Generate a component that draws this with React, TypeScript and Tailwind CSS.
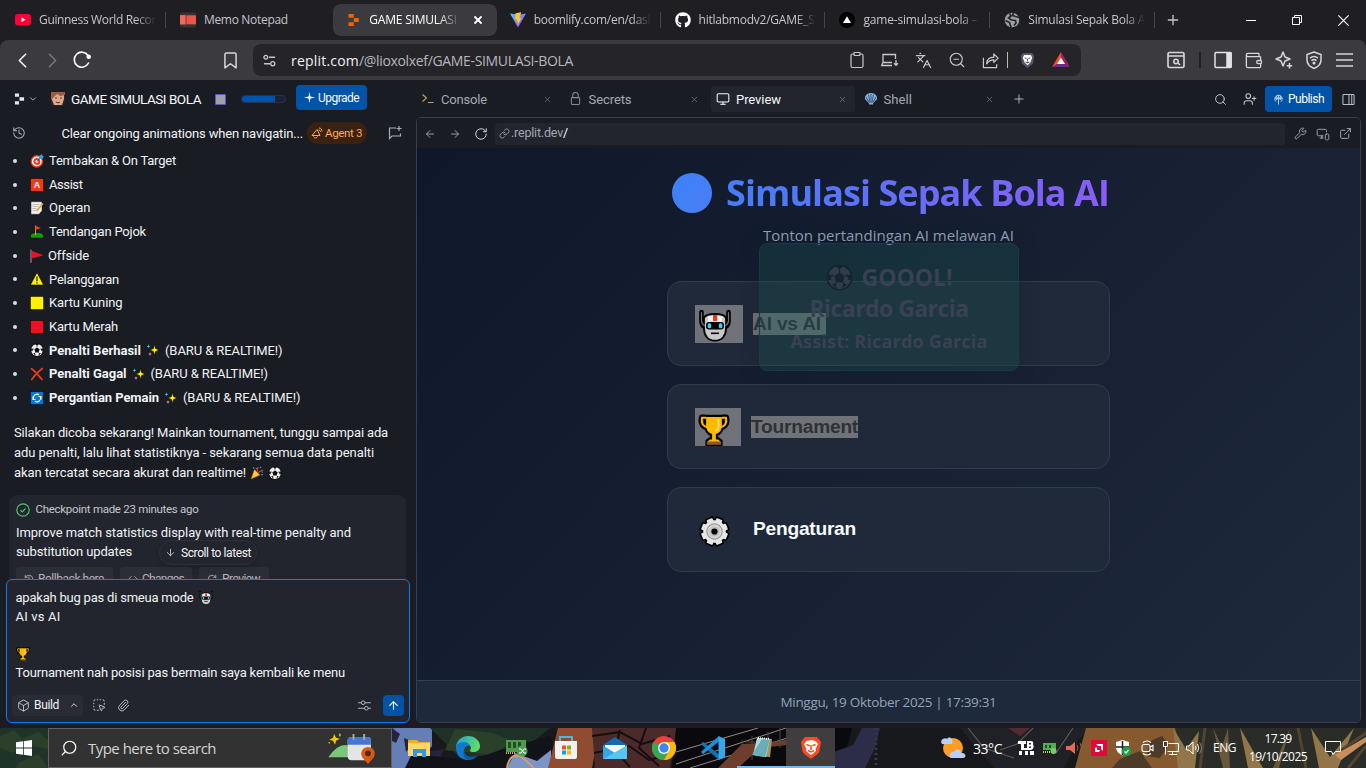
import React, { useLayoutEffect, useRef, useState } from "react";
import { FaGithub } from "react-icons/fa";
import {
  ArrowDown, ArrowLeft, ArrowRight, ArrowUp, Box, ChevronDown, ChevronLeft, ChevronRight, ChevronUp,
  Clipboard, Code, ExternalLink, History, Languages, Link, Monitor, MonitorSmartphone,
  Paperclip, Plus, RotateCw, Search, SquareDashedMousePointer, UserPlus, Wallet, Wrench, X, ZoomOut,
} from "lucide-react";

type FitProps = { w?: number; className?: string; children: string };

// Tracks text so that it fills the requested width.
function Fit({ w, className = "", children }: FitProps) {
  const ref = useRef<HTMLSpanElement>(null);
  const [spacing, setSpacing] = useState(0);
  useLayoutEffect(() => {
    if (ref.current && w) {
      setSpacing((w - ref.current.getBoundingClientRect().width) / children.length);
    }
  }, []);
  return (
    <span ref={ref} className={`inline-block shrink-0 whitespace-pre ${className}`} style={{ letterSpacing: spacing }}>
      {children}
    </span>
  );
}

function Cell({ className = "", children }: { className?: string; children?: React.ReactNode }) {
  return <div className={`flex shrink-0 items-center justify-center ${className}`}>{children}</div>;
}

/* ---------- Emoji drawings ---------- */

function Robot({ className = "" }) {
  return (
    <svg viewBox="0 0 32 32" className={`shrink-0 ${className}`}>
      <path d="M2.500 2.500v9c0 3 1 5 3 6M29.500 2.500v9c0 3-1 5-3 6" fill="none" stroke="#000" strokeWidth="4.600" strokeLinecap="round" />
      <path d="M5 8.500c1-3 4-4 11-4s10 1 11 4V19c0 7-4 12.200-11 12.200S5 26 5 19z" fill="#c9c9c9" stroke="#000" strokeWidth="1.800" />
      <path d="M2.500 3v8c0 3 1 4 3 5M29.500 3v8c0 3-1 4-3 5" fill="none" stroke="#777" strokeWidth="1.200" strokeLinecap="round" />
      <path d="M9 7c4-1.500 10-1.500 14 0v5H9z" fill="#f2f2f2" />
      <rect x="14" y="5.500" width="4.200" height="6" fill="#f03a17" />
      <rect x="7" y="12.500" width="18" height="7.500" rx="3" fill="#000" />
      <rect x="8.600" y="13.800" width="3.600" height="5" rx="1.500" fill="#3dcdf5" />
      <rect x="19.800" y="13.800" width="3.600" height="5" rx="1.500" fill="#3dcdf5" />
      <path d="M12 23.800h8" stroke="#000" strokeWidth="1.600" />
    </svg>
  );
}

function Trophy({ className = "" }) {
  return (
    <svg viewBox="0 0 32 32" className={`shrink-0 ${className}`}>
      <path d="M7 3H3.500c-2 7 2 10.500 7 11.500M25 3h3.500c2 7-2 10.500-7 11.500" fill="none" stroke="#000" strokeWidth="5" strokeLinejoin="round" />
      <path d="M7 1.800h18v9.500c0 5-3 8.500-6 9.500v3.500h1.500l3 2.500v4.500h-15v-4.500l3-2.500H13v-3.500c-3-1-6-4.500-6-9.500z" fill="#ffb900" stroke="#000" strokeWidth="2.200" />
      <path d="M8 3.800H4C3 9 5 12.500 10 13.500M24 3.800h4C29 9 27 12.500 22 13.500" fill="none" stroke="#ffb900" strokeWidth="2" />
      <path d="M20.500 5v8c0 2.500-1.500 3.500-3.500 4" fill="none" stroke="#ffdc80" strokeWidth="1.600" />
      <path d="M8.800 27.500h14.400v3.200H8.800z" fill="#8e562e" />
    </svg>
  );
}

const gearTeeth = [0, 45, 90, 135, 180, 225, 270, 315];

function Gear({ className = "" }) {
  return (
    <svg viewBox="0 0 32 32" className={`shrink-0 ${className}`}>
      {gearTeeth.map((a) => <rect key={a} x="11.200" y="0.500" width="9.600" height="8" rx="2" fill="#000" transform={`rotate(${a + 22.5} 16 16)`} />)}
      <circle cx="16" cy="16" r="13.200" fill="#000" />
      {gearTeeth.map((a) => <rect key={a} x="12.700" y="2.200" width="6.600" height="6" rx="1" fill="#e6e6e6" transform={`rotate(${a + 22.5} 16 16)`} />)}
      <circle cx="16" cy="16" r="11.600" fill="#e6e6e6" />
      <circle cx="16" cy="16" r="8" fill="#d2d2d2" stroke="#767676" strokeWidth="0.800" />
      <circle cx="16" cy="16" r="5" fill="#bcbcbc" />
      <circle cx="16" cy="16" r="3.200" fill="#000" />
    </svg>
  );
}

function Ball({ className = "", light = "#f2f2f2", dark = "#101014" }) {
  return (
    <svg viewBox="0 0 32 32" className={`shrink-0 ${className}`}>
      <circle cx="16" cy="16" r="15.500" fill={dark} />
      <circle cx="16" cy="16" r="13.500" fill={light} />
      <path d="M16 10l6 4.500-2.300 7h-7.400L10 14.500z" fill={dark} />
      <path d="M11.500 2.500h9L16 6.500zM2.500 12L7 13.500 5.500 19 2.500 19zM29.500 12L25 13.500l1.500 5.500 3 0zM7 24l4-1 2 6zM25 24l-4-1-2 6z" fill={dark} />
      <path d="M16 10V5M10 14.500L6 13M22 14.500l4-1.500M12.300 21.500L10 25M19.700 21.500L22 25" stroke={dark} strokeWidth="1.200" />
    </svg>
  );
}

function Sparkles() {
  return (
    <svg viewBox="0 0 14 14" className="size-3.5 shrink-0">
      <path d="M8.500 1.500l1 4 3.500 1.500-3.500 1.500-1 4-1-4L4 7l3.500-1.500z" fill="#fff100" stroke="#000" strokeWidth=".5" />
      <path d="M2.500 1.200l.5 1.600 1.500.6-1.500.6-.5 1.500L2 4 .6 3.400 2 2.800z" fill="#28c3ee" />
      <path d="M4 9l.5 1.400 1.300.6-1.300.6L4 13l-.5-1.400L2.200 11l1.300-.6z" fill="#f49ac8" />
    </svg>
  );
}

function Party() {
  return (
    <svg viewBox="0 0 14 14" className="size-3.5 shrink-0">
      <path d="M4.500 3.500L1 13l9-4z" fill="#ffc83d" stroke="#9b6a12" strokeWidth=".5" />
      <path d="M7 6c1-3 0-3.500 1-5M8 7c2-3 3-1 5-3" fill="none" stroke="#d83b2c" strokeWidth="1.200" />
      <path d="M3 1.500l1.300.8M10 1l1 1M11 8.500l2 .5" stroke="#28a8ee" strokeWidth="1.200" />
      <path d="M6 2l.5 1M12 6l1 .3" stroke="#4bbf4b" strokeWidth="1.100" />
    </svg>
  );
}

function ListEmoji({ kind }: { kind: string }) {
  if (kind === "ball") return <Ball className="size-3.5" />;
  return (
    <svg viewBox="0 0 14 14" className="size-3.5 shrink-0">
      {kind === "target" && <>
        <circle cx="6.800" cy="7.400" r="6.300" fill="#f03a17" /><circle cx="6.800" cy="7.400" r="4.200" fill="none" stroke="#fff" strokeWidth="1.400" />
        <circle cx="6.800" cy="7.400" r="1.300" fill="#fff" /><path d="M7 7.500L10 4" stroke="#444" /><path d="M8.500 5L8.800 2.200 12 0l.3 1.700 1.700.3-2 3z" fill="#28a8e0" />
      </>}
      {kind === "assist" && <><rect width="14" height="14" fill="#000" /><rect x=".7" y=".7" width="12.600" height="12.600" fill="#f03a17" /><text x="7" y="10.300" textAnchor="middle" className="fill-white font-['Liberation_Sans'] text-[9px] font-bold">A</text></>}
      {kind === "memo" && <><path d="M1 .7h11v9l-3 3.600H1z" fill="#f2f2f2" stroke="#222" strokeWidth=".5" /><path d="M2.500 3.500h7M2.500 5.500h6M2.500 7.500h4M2.500 9.500h3" stroke="#aaa" strokeWidth=".8" /><path d="M6.500 10l6.500-7.500" stroke="#e6a32e" strokeWidth="1.700" /></>}
      {kind === "golf" && <><path d="M.5 10.500C1 6.500 13 6.500 13.500 10.500V13H.5z" fill="#139a10" stroke="#000" strokeWidth=".5" /><path d="M5.500 10V.5" stroke="#dd9b28" /><path d="M5.500.8L11 3 5.500 5z" fill="#f03a17" /></>}
      {kind === "flag" && <><path d="M1 .7v13" stroke="#999" strokeWidth="1.100" /><path d="M1.700 1.800L13.500 6.200 1.700 9.500z" fill="#e81224" /></>}
      {kind === "warn" && <><path d="M7 .5L13.600 13H.4z" fill="#fff100" stroke="#000" strokeWidth=".6" /><path d="M7 4.500v4.700M7 10.300v1.300" stroke="#111" strokeWidth="1.200" /></>}
      {kind === "yellow" && <><rect width="14" height="14" fill="#000" /><rect x=".7" y=".7" width="12.600" height="12.600" fill="#fff100" /></>}
      {kind === "red" && <><rect width="14" height="14" fill="#000" /><rect x=".7" y=".7" width="12.600" height="12.600" fill="#e81224" /></>}
      {kind === "cross" && <path d="M1.500 1.800C5 4 9 9 12 12.500M12.300 1.500C8 5 4 9 1.800 12.500" fill="none" stroke="#f03a17" strokeWidth="1.700" strokeLinecap="round" />}
      {kind === "sync" && <><rect width="14" height="14" fill="#000" /><rect x=".7" y=".7" width="12.600" height="12.600" fill="#0078d7" /><path d="M3.500 8a3.700 3.700 0 0 1 5.500-4.200M10.500 6A3.700 3.700 0 0 1 5 10.200M3 5.500v3h2.500M11 8.500v-3H8.500" fill="none" stroke="#fff" strokeWidth="1.100" /></>}
    </svg>
  );
}

/* ---------- Browser chrome ---------- */

function TabIcon({ kind }: { kind: string }) {
  if (kind === "github") return <FaGithub className="size-4 shrink-0 text-white" />;
  return (
    <svg viewBox="0 0 16 16" className="size-4 shrink-0">
      {kind === "youtube" && <><rect y="2" width="16" height="11.500" rx="3" fill="#ff0033" /><path d="M6.500 5.300v5l4-2.500z" fill="#fff" /></>}
      {kind === "memo" && <><rect y=".5" width="16" height="15" rx="2" fill="#353535" /><rect y="3.300" width="16" height="9" fill="#e9564b" /><path d="M0 3.300h6v9H0z" fill="#f26a5e" /><path d="M6 1v14" stroke="#6d2723" strokeWidth=".8" /></>}
      {kind === "replit" && <path d="M3.500 2h5.300v3.800H3.500zM8.800 6h5v4h-5zM3.500 10.200h5.300V14H3.500z" fill="#f26207" />}
      {kind === "vite" && <><defs><linearGradient id="vg" x2="1" y2="1"><stop stopColor="#41d1ff" /><stop offset="1" stopColor="#bd34fe" /></linearGradient></defs><path d="M0 1.500L8 15.500 16 1.500l-7 1.200z" fill="url(#vg)" /><path d="M11.300.2L5.500 1.300l-.4 6.400 1.900-.4-.5 2.600 1.500-.4-.7 4 4.200-7.700-2 .4z" fill="#ffc928" /></>}
      {kind === "vercel" && <><circle cx="8" cy="8" r="8" fill="#000" /><path d="M8 4.200l4 6.800H4z" fill="#fff" /></>}
      {kind === "globe" && <><circle cx="8" cy="8" r="7.300" fill="#9aa0a8" /><path d="M1.500 8.500l4 2 1.500 4.500M5.500 1.500L7 4 4.500 6l3 2 4 .5L12 11l-2 2.500M9.500 1l-1 2.500 3 1 3.500 1" fill="none" stroke="#26272c" strokeWidth="1.700" /></>}
    </svg>
  );
}

const tabs = [
  { kind: "youtube", label: "Guinness World Recor", w: 117, sep: true },
  { kind: "memo", label: "Memo Notepad", w: 84, sep: false },
  { kind: "replit", label: "GAME SIMULASI B", w: 98, sep: false },
  { kind: "vite", label: "boomlify.com/en/dash", w: 121, sep: true },
  { kind: "github", label: "hitlabmodv2/GAME_S", w: 116, sep: true },
  { kind: "vercel", label: "game-simulasi-bola –", w: 114, sep: true },
  { kind: "globe", label: "Simulasi Sepak Bola AI", w: 120, sep: true },
];

function TabStrip() {
  return (
    <div className="flex h-10 bg-[#1f1e23] pl-px text-[12px] text-[#c6c5ca]">
      {tabs.map((t, i) => (
        <div key={t.label} className="flex h-10 w-[164.900px] shrink-0 items-center">
          <div className={`flex h-8 min-w-0 flex-1 items-center ${i === 2 ? "-mr-px ml-[2px] rounded-lg bg-[#3b3a3f] pl-[12.500px] text-white" : "pl-3.5"}`}>
            <TabIcon kind={t.kind} />
            <div className={`ml-2 overflow-hidden ${i === 2 ? "w-[92px] [mask-image:linear-gradient(to_right,black_75%,transparent)]" : t.kind === "memo" ? "w-[117px]" : "w-[117px] [mask-image:linear-gradient(to_right,black_83%,transparent)]"}`}>
              <Fit w={t.w}>{t.label}</Fit>
            </div>
            {i === 2 && <X className="ml-[11px] size-3 shrink-0" strokeWidth={3.6} />}
          </div>
          {t.sep && <div className="h-4 w-px bg-[#45444a]" />}
        </div>
      ))}
      <Cell className="w-9"><Plus className="size-4" strokeWidth={2} /></Cell>
      <div className="ml-auto flex text-white">
        <Cell className="w-[46px]"><div className="h-px w-[10px] bg-white" /></Cell>
        <Cell className="w-[46px]"><svg viewBox="0 0 10 10" className="size-[10px]" fill="none" stroke="currentColor"><path d="M.5 2.500h7v7h-7zM2.500 2.500v-2h7v7h-2" /></svg></Cell>
        <Cell className="w-[46px]"><svg viewBox="0 0 10 10" className="size-[11px]" stroke="currentColor"><path d="M.3.3l9.400 9.400M9.700.3L.3 9.700" /></svg></Cell>
      </div>
    </div>
  );
}

function Toolbar() {
  return (
    <div className="h-10 bg-[#1f1e23]">
      <div className="flex h-10 items-center rounded-t-lg bg-[#3b3a3f] pl-[7px] text-[#d8d7dc]">
        <Cell className="w-[30px]"><ChevronLeft className="size-[25px] text-white" strokeWidth={1.5} /></Cell>
        <Cell className="w-[30px]"><ChevronRight className="size-[25px] text-[#77767c]" strokeWidth={1.5} /></Cell>
        <Cell className="w-[30px]">
          <svg viewBox="0 0 18 18" className="size-[18px]" fill="none" stroke="#fff" strokeWidth="1.600" strokeLinecap="round"><path d="M15.500 12A7.500 7.500 0 1 1 15 4.500" /><circle cx="15.700" cy="5.800" r="1.500" fill="#fff" /></svg>
        </Cell>
        <Cell className="ml-[118px] w-[30px]"><svg viewBox="0 0 14 18" className="h-[17px] w-[13px]" fill="none" stroke="currentColor" strokeWidth="1.600" strokeLinejoin="round"><path d="M2.500 1h9Q13 1 13 2.500V17l-6-4.500L1 17V2.500Q1 1 2.500 1z" /></svg></Cell>
        <div className="ml-2 flex h-8 w-[828px] shrink-0 items-center rounded-lg bg-[#252429] text-[#c9c8cd]">
          <Cell className="w-8"><svg viewBox="0 0 14 14" className="size-[13px]" fill="none" stroke="currentColor" strokeWidth="1.400"><circle cx="3" cy="3.500" r="2" /><path d="M6.500 3.500H13M1 10.500h6.500" /><circle cx="10.500" cy="10.500" r="2.200" /></svg></Cell>
          <div className="ml-1.5 flex text-[14px]">
            <Fit w={68} className="text-[#f0f0f2]">replit.com</Fit><Fit w={214} className="text-[#b7b6bc]">/@lioxolxef/GAME-SIMULASI-BOLA</Fit>
          </div>
          <div className="ml-auto flex pr-[3px]">
            <Cell className="w-8"><Clipboard className="size-[18px]" strokeWidth={1.6} /></Cell>
            <Cell className="w-[33px]"><svg viewBox="0 0 18 14" className="h-[14px] w-[18px]" fill="none" stroke="currentColor" strokeWidth="1.300"><path d="M14.500 6V1.500H2v8M11 9.500H2L.7 12.500H11M15 7v5M13 10.300L15 12.300l2-2" /></svg></Cell>
            <Cell className="w-[34px]"><Languages className="size-[17px]" strokeWidth={1.7} /></Cell>
            <Cell className="w-[34px]"><ZoomOut className="size-[18px]" strokeWidth={1.5} /></Cell>
            <Cell className="w-[33px]"><svg viewBox="0 0 18 18" className="size-[17px]" fill="none" stroke="currentColor" strokeWidth="1.300" strokeLinejoin="round"><path d="M1.500 6v10.500h14V13M5 12.500c0-5 3-7 7.500-7V2L17 6.500 12.500 11V8.300c-3.500 0-5.500 1-7.500 4.200z" /></svg></Cell>
            <Cell className="w-px"><div className="h-4 w-px bg-[#b9b8bd]" /></Cell>
            <Cell className="ml-[2px] w-[34px]"><svg viewBox="0 0 16 18" className="h-[17px] w-[15px]"><path d="M3 1h10l2 3-1 8-6 5-6-5L1 4z" fill="#55586b" /><path d="M4.500 3h7L13 6l-2 5-3 3-3-3-2-5z" fill="#fff" /><path d="M5 6l2 1M11 6L9 7M8 7v3M6 10.500l2 1 2-1" stroke="#55586b" strokeWidth="1.100" /></svg></Cell>
            <Cell className="w-[34px]"><svg viewBox="0 0 18 16" className="h-[16px] w-[18px]"><path d="M9 0L0 15l9-4.500z" fill="#ff4724" /><path d="M9 0l9 15-9-4.500z" fill="#9e1f63" /><path d="M0 15h18l-9-5z" fill="#662d91" /><path d="M9 5.500L13 12H5z" fill="#fff" /></svg></Cell>
          </div>
        </div>
        <div className="ml-auto flex items-center pr-[7px]">
          <Cell className="w-8"><svg viewBox="0 0 18 18" className="size-[18px]" fill="none" stroke="currentColor" strokeWidth="1.600"><rect x="1" y="1.500" width="16" height="15" rx="1.500" /><path d="M1 5h16M11 12l2 2" /><circle cx="9" cy="10.500" r="2.200" /></svg></Cell>
          <Cell className="w-4"><div className="h-4 w-[2px] bg-[#222126]" /></Cell>
          <Cell className="w-[30px]"><svg viewBox="0 0 18 18" className="size-[18px]" fill="none" stroke="#e4e3e8" strokeWidth="1.500"><rect x="1" y="1.500" width="16" height="15" rx="1" /><path d="M13 2H17v14h-4z" fill="#e4e3e8" /></svg></Cell>
          <Cell className="w-[31px]"><Wallet className="size-[19px]" strokeWidth={1.6} /></Cell>
          <Cell className="w-[30px]"><svg viewBox="0 0 18 18" className="size-[18px]" fill="none" stroke="currentColor" strokeWidth="1.500" strokeLinejoin="round"><path d="M8 1l2 5 5 2-5 2-2 5-2-5-5-2 5-2zM14.500 12v5.500M11.700 14.700h5.500" /></svg></Cell>
          <Cell className="w-[30px]"><svg viewBox="0 0 18 18" className="size-[18px]" fill="none" stroke="currentColor" strokeWidth="1.500"><path d="M9 1l7 2.500v5C16 13 13 16 9 17.500 5 16 2 13 2 8.500v-5zM5 7.200c2.500-2 5.500-2 8 0M6.500 9.600c1.500-1.300 3.500-1.300 5 0" /><circle cx="9" cy="12" r=".8" fill="currentColor" /></svg></Cell>
          <Cell className="w-[30px]"><svg viewBox="0 0 17 14" className="h-[14px] w-[17px]" stroke="currentColor" strokeWidth="1.700"><path d="M0 1h17M0 7h17M0 13h17" /></svg></Cell>
        </div>
      </div>
    </div>
  );
}

/* ---------- Workspace: chat column ---------- */

const stats = [
  { kind: "target", label: "Tembakan & On Target", w: 127 },
  { kind: "assist", label: "Assist", w: 33.5 },
  { kind: "memo", label: "Operan", w: 41.5 },
  { kind: "golf", label: "Tendangan Pojok", w: 97 },
  { kind: "flag", label: "Offside", w: 41 },
  { kind: "warn", label: "Pelanggaran", w: 70 },
  { kind: "yellow", label: "Kartu Kuning", w: 73.5 },
  { kind: "red", label: "Kartu Merah", w: 69 },
  { kind: "ball", label: "Penalti Berhasil", w: 92, fresh: true },
  { kind: "cross", label: "Penalti Gagal", w: 77.5, fresh: true },
  { kind: "sync", label: "Pergantian Pemain", w: 110, fresh: true },
];

function ReplitLogo() {
  return <svg viewBox="0 0 12 12" className="h-[12px] w-[11px]"><path d="M1 0h4.500v3.500H1zM6 4h5v4H6zM1 8.500h4.500V12H1z" fill="#e4e6eb" /></svg>;
}

function ProjectBar() {
  return (
    <div className="flex h-[38px] items-center pl-3.5 text-[#f5f9fc]">
      <ReplitLogo />
      <ChevronDown className="ml-[3px] size-2.5 text-[#c2c8cc]" />
      <div className="ml-[13px] flex h-3.5 w-3.5 items-end justify-center rounded-sm bg-[#2b2320]">
        <svg viewBox="0 0 14 14" className="size-3.5"><path d="M1 1h12v6l-2 6H3L1 8z" fill="#d9a78c" /><path d="M0 0h14v3L9 4 6 2 2 6 0 8z" fill="#9b5b45" /><path d="M4 6h2M9 6h2M5 10c2 1 3 1 4 0" stroke="#7b2f29" /></svg>
      </div>
      <Fit w={130} className="ml-1.5 pt-px text-[13.500px]">GAME SIMULASI BOLA</Fit>
      <div className="ml-3.5 size-[11px] rounded-[1px] border-[1.500px] border-[#6155c4] bg-[#9da2a6]" />
      <div className="ml-[15px] flex h-2 w-[45px] rounded-full border border-[#2b3245] bg-[#1c2333]"><div className="w-[33px] rounded-l-full bg-[#0053a6]" /></div>
      <div className="mb-[3px] ml-2.5 flex h-[25px] w-[71px] items-center rounded bg-[#0053a6] pl-2">
        <svg viewBox="0 0 12 12" className="size-[11px]"><path d="M6 0l1 5 5 1-5 1-1 5-1-5-5-1 5-1z" fill="#fff" /></svg>
        <Fit w={41} className="ml-[3px] text-[12px]">Upgrade</Fit>
      </div>
    </div>
  );
}

function ChatPanel() {
  return (
    <div className="relative flex w-[416px] shrink-0 flex-col font-['Roboto',sans-serif] text-[13px] text-[#f0f3f6]">
      <ProjectBar />
      <div className="flex h-[30px] items-center pl-3">
        <History className="size-3.5 text-[#a9aeb6]" strokeWidth={1.8} />
        <Fit w={241.5} className="ml-[35.500px] pt-px">Clear ongoing animations when navigatin...</Fit>
        <div className="ml-[4px] flex h-[22px] w-[60px] items-center rounded-full bg-[#3a2213] pl-1 text-[#ffa657]">
          <svg viewBox="0 0 12 12" className="size-[12px]" fill="none" stroke="currentColor" strokeWidth="1"><path d="M1 8.500L6 2.500 9 8.500zM2.500 9.500c1 2 3 2 4 0M8 1c2 0 3 1.500 3 3.500M7.500 3c1.500 0 2 1 2 2" /></svg>
          <Fit w={37} className="ml-[2px] pt-px text-[11.500px]">Agent 3</Fit>
        </div>
        <svg viewBox="0 0 14 14" className="ml-[21px] size-3.5" fill="none" stroke="#a9aeb6" strokeWidth="1.200"><path d="M8 2H1.500v10.500L4 10h8.500V7.500M11 0v5M8.500 2.500h5" /></svg>
      </div>
      <div className="h-[431px] overflow-hidden">
        <ul className="pt-[1px]">
          {stats.map((s) => (
            <li key={s.kind} className="flex h-[23.700px] items-center pl-[13px]">
              <span className="size-1 rounded-full bg-[#d8dde2]" />
              <span className="ml-[13px] flex"><ListEmoji kind={s.kind} /></span>
              <Fit w={s.w} className={`${s.kind === "flag" ? "ml-1" : "ml-[5px]"} ${s.fresh ? "font-bold" : ""}`}>{s.label}</Fit>
              {s.fresh && <><span className="ml-[5px] mr-[5px]"><Sparkles /></span><Fit w={117.5}>(BARU & REALTIME!)</Fit></>}
            </li>
          ))}
        </ul>
        <div className="mt-[13px] flex flex-col pl-3.5 leading-5">
          <Fit w={374} className="self-start">Silakan dicoba sekarang! Mainkan tournament, tunggu sampai ada</Fit>
          <Fit w={360} className="self-start">adu penalti, lalu lihat statistiknya - sekarang semua data penalti</Fit>
          <div className="flex items-center gap-1"><Fit w={232}>akan tercatat secara akurat dan realtime!</Fit><Party /><Ball className="size-3.5" /></div>
        </div>
        <div className="ml-[9px] mt-[12px] h-28 w-[397px] rounded-lg bg-[#22252d] px-[7px] pt-1.5">
          <div className="flex h-[18px] items-center text-[12px] text-[#c2c8cc]">
            <svg viewBox="0 0 14 14" className="size-3.5" fill="none" stroke="#4fc26b" strokeWidth="1.200"><circle cx="7" cy="7" r="6.200" /><path d="M4.500 7.200l1.800 1.700 3.200-3.500" /></svg>
            <Fit w={163} className="ml-[5.500px] text-[11.500px]">Checkpoint made 23 minutes ago</Fit>
          </div>
          <div className="mt-[4px] flex flex-col leading-[19px]">
            <Fit w={335} className="self-start">Improve match statistics display with real-time penalty and</Fit>
            <Fit w={116} className="self-start">substitution updates</Fit>
          </div>
          <div className="mt-[6px] flex gap-[7px] text-[12px] text-[#aeb4bb]">
            <div className="flex h-[24px] w-[97px] items-center rounded bg-[#2b2e37] pl-2"><History className="size-[10px]" /><Fit w={66} className="ml-1">Rollback here</Fit></div>
            <div className="flex h-[24px] w-[72px] items-center rounded bg-[#2b2e37] pl-2"><Code className="size-[10px]" /><Fit w={42} className="ml-1">Changes</Fit></div>
            <div className="flex h-[24px] w-[70px] items-center rounded bg-[#2b2e37] pl-2"><RotateCw className="size-[10px]" /><Fit w={38} className="ml-[5px]">Preview</Fit></div>
          </div>
        </div>
      </div>
      <div className="absolute left-[159px] top-[460px] flex h-[25px] w-[98px] items-center rounded-full border border-[#2d3039] bg-[#22252d] pl-[5px] shadow-md">
        <ArrowDown className="size-[11px] text-[#c2c8cc]" strokeWidth={2} />
        <Fit w={70} className="ml-[5px] pt-px text-[12px]">Scroll to latest</Fit>
      </div>
      <div className="ml-[6px] h-36 w-[404px] rounded-md border border-[#0f7bf0] bg-[#22252d] px-[5px] pt-[8px]">
        <div className="flex h-[19px] items-center pl-[3.500px]"><Fit w={178}>apakah bug pas di smeua mode</Fit><Robot className="ml-[5px] size-3.5" /></div>
        <div className="h-[37px] pl-[3.500px] leading-[19px]"><Fit w={45}>AI vs AI</Fit></div>
        <div className="flex h-[19px] items-center pl-[4px]"><Trophy className="size-3.5" /></div>
        <div className="h-[19px] pl-[3.500px] leading-[19px]"><Fit w={329.5}>Tournament nah posisi pas bermain saya kembali ke menu</Fit></div>
        <div className="mt-[12px] flex h-[22px] items-center">
          <div className="flex h-[21px] w-[71px] items-center rounded bg-[#292c35] pl-[5px]"><Box className="size-[13px] text-[#c2c8cc]" strokeWidth={1.7} /><Fit w={25} className="ml-[4px] text-[12px]">Build</Fit><ChevronUp className="ml-[10px] size-2.5" /></div>
          <SquareDashedMousePointer className="ml-[9px] size-[14px] text-[#c2c8cc]" strokeWidth={1.6} />
          <Paperclip className="ml-[11px] size-[13px] text-[#c2c8cc]" strokeWidth={1.7} />
          <svg viewBox="0 0 14 12" className="ml-auto h-[11px] w-[13px]" fill="none" stroke="#b9bfc5"><path d="M0 3h3.500M7.500 3H14M0 9h7M11 9h3" /><circle cx="5.500" cy="3" r="2" /><circle cx="9" cy="9" r="2" /></svg>
          <Cell className="ml-3 h-[21px] w-[21px] rounded bg-[#0053a6]"><ArrowUp className="size-[13px]" strokeWidth={2} /></Cell>
        </div>
      </div>
    </div>
  );
}

/* ---------- Workspace: preview column ---------- */

function PaneTab({ icon, label, w, active }: { icon: React.ReactNode; label: string; w: number; active?: boolean }) {
  return (
    <div className={`mr-[4px] flex h-[26px] w-[143.500px] shrink-0 items-center rounded pl-[5px] ${active ? "bg-[#22252d] text-[#f5f9fc]" : "text-[#a4aab2]"}`}>
      <Cell className="w-[14px]">{icon}</Cell>
      <Fit w={w} className="ml-[6px] pt-px">{label}</Fit>
      <X className="ml-auto mr-[8px] size-[9px] text-[#6f7681]" strokeWidth={2} />
    </div>
  );
}

function PaneTabs() {
  return (
    <div className="flex h-[37px] items-center pt-px font-['Roboto',sans-serif] text-[13px] text-[#c2c8cc]">
      <PaneTab w={46} label="Console" icon={<svg viewBox="0 0 12 12" className="size-3" fill="none" stroke="#b9ab57" strokeWidth="1.100"><path d="M.5 1.500l4 3.500-4 3.500M6 9.500h5.500" /></svg>} />
      <PaneTab w={43} label="Secrets" icon={<svg viewBox="0 0 12 14" className="h-[14px] w-[11px]" fill="none" stroke="#858b95" strokeWidth="1.100"><rect x="1.500" y="5.500" width="9" height="7.500" rx="1" /><path d="M3 5.500V3a3 3 0 0 1 6 0v2.500" /></svg>} />
      <PaneTab w={45} label="Preview" active icon={<Monitor className="size-3.5" strokeWidth={1.8} />} />
      <PaneTab w={28.5} label="Shell" icon={<svg viewBox="0 0 14 14" className="size-3.5"><path d="M7 1c4 0 6.500 3 6 6l-4 4.500v1H5v-1L1 7c-.5-3 2-6 6-6z" fill="#85b2df" /><path d="M7 2v9M4.500 2.500l1.500 8M9.500 2.500L8 10.500M2 5l3 5.500M12 5l-3 5.500" stroke="#26415e" strokeWidth=".8" /></svg>} />
      <Plus className="ml-[6px] size-3.5" strokeWidth={1.5} />
      <div className="ml-auto flex items-center pr-[2px]">
        <Cell className="w-7"><Search className="size-[13px]" strokeWidth={1.8} /></Cell>
        <Cell className="w-[31px]"><UserPlus className="size-[14px]" strokeWidth={1.8} /></Cell>
        <div className="flex h-[26px] w-[67px] items-center rounded bg-[#0053a6] pl-[8px] text-white">
          <svg viewBox="0 0 12 12" className="size-[11px]" fill="none" stroke="#c7dcf5" strokeWidth="1"><path d="M3.500 8.500A4 4 0 1 1 8.500 8.500M6 1v10.500M2 4.500h8M3.500 6.500L6 4l2.500 2.500M4 2v4M8 2v4" /></svg>
          <Fit w={36} className="ml-[4px] text-[12px]">Publish</Fit>
        </div>
        <Cell className="w-[32px]"><svg viewBox="0 0 14 14" className="size-[13px]" fill="none" stroke="#b9bfc5" strokeWidth="1.100"><rect x="1" y="1.500" width="12" height="11" rx="1" /><path d="M7.500 1.500v11M10.500 2v10" /></svg></Cell>
      </div>
    </div>
  );
}

function PreviewNav() {
  return (
    <div className="flex h-[30px] shrink-0 items-center bg-[#1a1c23] pl-[3px] pt-px font-['Roboto',sans-serif] text-[#a1a7b0]">
      <Cell className="w-5"><ArrowLeft className="size-3" strokeWidth={1.8} /></Cell>
      <Cell className="ml-[5px] w-5"><ArrowRight className="size-3" strokeWidth={1.8} /></Cell>
      <Cell className="ml-[6px] w-5"><RotateCw className="size-3.5 text-[#cdd2d7]" strokeWidth={1.7} /></Cell>
      <div className="ml-[4px] flex h-[22px] w-[790px] items-center rounded bg-[#22252d] pl-[4px] text-[12.500px]">
        <Link className="size-[11px]" strokeWidth={1.8} />
        <Fit w={52} className="ml-[1px]">.replit.dev</Fit><span className="text-white">/</span>
      </div>
      <Wrench className="ml-[9px] size-[13px]" strokeWidth={1.7} />
      <MonitorSmartphone className="ml-[9px] size-[14px]" strokeWidth={1.6} />
      <ExternalLink className="ml-[9px] size-[13px]" strokeWidth={1.8} />
    </div>
  );
}

function MenuCard({ children }: { children: React.ReactNode }) {
  return <div className="flex h-[85px] w-[443px] items-center rounded-[14px] border border-[#2e3c4d] bg-[#1f2939] pl-[27px] font-['Liberation_Sans',Arial,sans-serif] text-[19.200px] font-bold">{children}</div>;
}

function GameScreen() {
  return (
    <div className="relative flex min-h-0 flex-1 flex-col items-center bg-[linear-gradient(135deg,#0f172a,#1e293b)]">
      <div className="flex h-[64px] w-[443px] items-end pl-[5px]">
        <div className="mb-[-1px] size-10 rounded-full bg-[linear-gradient(135deg,#3b82f6,#4a7df6)]" />
        <Fit w={383} className="ml-[14px] mb-[-2px] bg-[linear-gradient(100deg,#447ef6,#8b5cf6)] bg-clip-text text-[36px] font-bold leading-[42px] text-transparent">Simulasi Sepak Bola AI</Fit>
      </div>
      <Fit w={251} className="mt-[11px] text-[15px] leading-[24px] text-[#94a3b8]">Tonton pertandingan AI melawan AI</Fit>
      <div className="mt-[34px] flex flex-col gap-[18px]">
        <MenuCard>
          <div className="flex h-[38px] w-12 items-end bg-[#6f7379] pb-px pl-1"><Robot className="h-[33px] w-8" /></div>
          <div className="ml-2.5 h-[22px] w-[73px] bg-[#6f7379] leading-[21px] text-[#30343a]"><Fit w={68}>AI vs AI</Fit></div>
        </MenuCard>
        <MenuCard>
          <div className="flex h-[38px] w-[46px] items-end bg-[#6f7379] pl-[3px]"><Trophy className="size-[32px]" /></div>
          <div className="ml-2.5 h-[22px] w-[107px] bg-[#6f7379] leading-[21px] text-[#303135]"><Fit w={107}>Tournament</Fit></div>
        </MenuCard>
        <MenuCard>
          <Gear className="ml-1 mt-[3px] size-[31px]" />
          <Fit w={103} className="ml-[23px] text-[#f8fafc]">Pengaturan</Fit>
        </MenuCard>
      </div>
      <div className="absolute left-[342px] top-[95px] flex h-[128px] w-[260px] flex-col items-center rounded-lg border border-[#173b42] bg-[#16534e]/35 pt-[18px] font-bold text-[#3a4154] shadow-[0_0_20px_rgba(15,23,42,0.25)]">
        <div className="flex h-[31px] items-center gap-[9px] text-[23px]"><Ball className="size-[27px]" light="#2d3d4a" dark="#17232f" /><Fit w={91}>GOOOL!</Fit></div>
        <Fit w={159} className="h-[32px] text-[23px] leading-[31px]">Ricardo Garcia</Fit>
        <Fit w={197} className="mt-[1px] text-[18px] leading-[30px]">Assist: Ricardo Garcia</Fit>
      </div>
    </div>
  );
}

function PreviewPanel() {
  return (
    <div className="flex w-[950px] flex-col">
      <PaneTabs />
      <div className="flex h-[606px] w-[945px] flex-col overflow-hidden rounded-[5px] border border-[#3b3d47]">
        <PreviewNav />
        <GameScreen />
        <Cell className="h-[42px] border-t border-[#334155] bg-[#1e293b] pt-[2px] text-[13.500px] text-[#94a3b8]"><Fit w={216}>Minggu, 19 Oktober 2025 | 17:39:31</Fit></Cell>
      </div>
    </div>
  );
}

/* ---------- Windows taskbar ---------- */

function Wallpaper() {
  return (
    <svg viewBox="0 0 1366 40" className="absolute inset-0 h-10 w-[1366px]" preserveAspectRatio="none">
      <rect width="1366" height="40" fill="#17191a" />
      <path d="M0 0h48v40H0z" fill="#1f3429" /><path d="M0 8l14-6 8 9 16-7 10 8v9L28 17 12 25 0 20zM20 34l18-8 10 14H15z" fill="#2c3f2b" />
      <path d="M390 0h42v18l-16 22h-26z" fill="#647fb5" /><path d="M392 0l8 6-4 9-4-2zM404 10l10 4-8 10zM420 25l24-4-8 19h-28z" fill="#29223e" />
      <path d="M430 0h120l-30 24-60 6z" fill="#1e3129" /><path d="M455 1l38 4 20 8-20 14-48-5z" fill="#2a4029" />
      <path d="M412 26l60 6 28-10 50-14 4 12-32 20H405z" fill="#121219" /><path d="M507 40l8-15 22 8 14-11v18z" fill="#7d94c6" /><path d="M507 40c2-12 7-14 15-11l12 11" fill="none" stroke="#d89b6b" strokeWidth="2" />
      <path d="M558 0h34l4 18-4 22h-44z" fill="#8f4c30" /><path d="M592 0h85l-7 40h-75z" fill="#4b2b29" />
      <path d="M592 8l28-4 22 12 28-8M594 25l35-7 20 14 23-6M620 2l-5 20 15 17M646 0l-7 20 20 18" fill="none" stroke="#170d10" strokeWidth="2" />
      <path d="M676 0h176l-10 40H672z" fill="#0a0a0e" /><path d="M676 24l82-24M676 36l110-36M690 40l130-40" stroke="#b6ab9e" strokeWidth=".8" />
      <path d="M742 12v24M752 8v24M768 4v24M780 0v20M795 0l4 20M745 14h65" stroke="#4e4340" strokeWidth="1" /><path d="M775 14l60-12-20 12-55 6-22 20h-20l24-24z" fill="#6d3d2d" />
      <path d="M862 0l28 0-14 18-11 22h-42l8-15 22-8z" fill="#2c2d48" /><path d="M880 0h82l40 40H870z" fill="#17181c" /><path d="M876 0v40" stroke="#343949" strokeWidth="3" strokeDasharray="2 3" />
      <path d="M960 0h130l-12 12-14 28h-70z" fill="#202126" /><path d="M1033 0l-16 16-17 6M968 0l16 20 30 10M1073 0l-17 25" fill="none" stroke="#5c5a5e" strokeWidth="1.100" />
      <path d="M1008 0h22l-10 8z" fill="#542a32" />
      <path d="M1086 0h90l26 40H1075z" fill="#86592f" /><path d="M1150 13l12-5 7 9-9 13-14-2zM1120 31l20-8 12 17h-40z" fill="#4d3b2a" />
      <path d="M1175 0h191v40h-180z" fill="#2a2d27" /><path d="M1173 0l13 21 13-18-4 37h-17zM1240 0l23 40h-15zM1311 0l19 29 24-29-16 40h-19z" fill="#927548" /><path d="M1213 0l9 19 6-19 2 40h-7zM1290 0l-11 40h-6z" fill="#6a5638" />
      <path d="M1298 0l8 40M1205 0l-5 40M1366 5l-26 18M1348 40l18-22" stroke="#54442f" strokeWidth="3" /><path d="M1335 27l31-18v5l-25 18z" fill="#c98d5c" />
    </svg>
  );
}

function AppIcon({ kind }: { kind: string }) {
  return (
    <svg viewBox="0 0 24 24" className="size-6">
      {kind === "brave" && <><path d="M6 1h12l4 5-1.500 9q-.5 2-2.500 3.500L12 23l-6-4.500Q4 17 3.500 15L2 6z" fill="#fb4a25" /><path d="M7.500 5L12 4l4.500 1L19 8l-2.500 5 .5 2-5 4-5-4 .5-2L5 8z" fill="#fff" /><path d="M7.500 8.500l3 1.200M16.500 8.500l-3 1.200M12 9v5M9 14.500l3 1.500 3-1.500" fill="none" stroke="#fb4a25" strokeWidth="1.500" /></>}
      {kind === "folder" && <><path d="M1 4h9l2 2h11v14H1z" fill="#f0aa2d" /><path d="M1 7h22v13H1z" fill="#ffd766" /><path d="M6 21v-8h13v8h-4v-4h-5v4z" fill="#3a95df" /></>}
      {kind === "edge" && <><defs><linearGradient id="eg" x1="0" y1="0" x2="1" y2=".3"><stop stopColor="#1b9de2" /><stop offset="1" stopColor="#5fdc6b" /></linearGradient></defs><path d="M0 12C0 5 5 0 12 0s12 5 12 10c0 4-3 6-7 6-3 0-3.500-1.500-2.500-2.500S15 8 9.500 7.500 1 10 0 12z" fill="url(#eg)" /><path d="M0 12c0-4 4-6 8.500-6 3 0 5 2 5.500 4-3-1-6 1-6 5 0 5 5 8 10 7-8 5-18 0-18-10z" fill="#1279d0" /><path d="M8 14c0 6 7 8.500 13.500 5C19 23 16 24 13 24 8 23 6 18 8 14z" fill="#0c59a4" /></>}
      {kind === "ram" && <><path d="M1 4h20v12H1z" fill="#4f9b4c" /><path d="M3 6h3v6H3zM8 6h3v6H8zM13 6h3v6h-3z" fill="#274b29" /><path d="M1 17h10" stroke="#c9ac4b" strokeWidth="2" strokeDasharray="1 1" /><circle cx="17" cy="15" r="5.500" fill="#4ba050" /><path d="M14 13h2l3 4h2M14 17h2l3-4h2" fill="none" stroke="#fff" /></>}
      {kind === "store" && <><path d="M6 6V1h12v5" fill="none" stroke="#4bb7e9" strokeWidth="2" /><path d="M1 5h22v16q0 2-2 2H3q-2 0-2-2z" fill="#f1f1f1" /><path d="M8 9.500h4v4H8z" fill="#f25022" /><path d="M13 9.500h4v4h-4z" fill="#7fba00" /><path d="M8 14.500h4v4H8z" fill="#00a4ef" /><path d="M13 14.500h4v4h-4z" fill="#ffb900" /></>}
      {kind === "mail" && <><path d="M0 9L12 1l12 8v4H0z" fill="#1269b0" /><path d="M2 9h20v9H2z" fill="#f5f5f5" /><path d="M0 9.500l12 7.500 12-7.500V23H0z" fill="#31a7e8" /><path d="M0 23l24-13.500V23z" fill="#54c6f2" /></>}
      {kind === "chrome" && <><circle cx="12" cy="12" r="12" fill="#ea4335" /><path d="M1.600 6A12 12 0 0 0 12 24l5-9-5-3z" fill="#34a853" /><path d="M12 24A12 12 0 0 0 22.400 6H12l5 9z" fill="#fbbc04" /><circle cx="12" cy="12" r="6" fill="#fff" /><circle cx="12" cy="12" r="4.700" fill="#4285f4" /></>}
      {kind === "code" && <><path d="M0 8l2-2.300L18 18.500V24L1.500 9.500z" fill="#1272b6" /><path d="M0 16l2 2.300L18 5.500V0L1.500 14.500z" fill="#1f8dd8" /><path d="M17.500 0L24 3v18l-6.500 3z" fill="#35a7ec" /></>}
      {kind === "note" && <><path d="M7 2l15 1-2 18-14-1z" fill="#a89463" /><path d="M7 2l13 1-4 18-13-2z" fill="#a8d9df" /><path d="M2 19L12 3l8 0-5 18z" fill="#68adb8" /><path d="M8 2l12 1" stroke="#e8f4f5" strokeWidth="2" strokeDasharray="1 1" /></>}
    </svg>
  );
}

const apps = ["folder", "edge", "ram", "store", "mail", "chrome", "code", "note", "brave"];

function Taskbar() {
  return (
    <div className="relative h-10 shrink-0 overflow-hidden">
      <Wallpaper />
      <div className="relative flex h-10 text-white">
        <Cell className="w-12"><svg viewBox="0 0 16 16" className="size-4" fill="#fff"><path d="M0 2.300L7 1.300V7.600H0zM7.800 1.200L16 0V7.600H7.800zM0 8.400h7v6.300l-7-1zM7.800 8.400H16V16l-8.200-1.200z" /></svg></Cell>
        <div className="flex h-10 w-[344px] shrink-0 items-center border border-[#626262] bg-[#323232] pl-[11px]">
          <Search className="size-[18px] -scale-x-100" strokeWidth={1.6} />
          <Fit w={128} className="ml-[10px] text-[15px] text-[#d4d4d4]">Type here to search</Fit>
          <svg viewBox="0 0 50 32" className="ml-auto mr-[14px] h-[31px] w-[49px]"><path d="M0 25Q12 8 23 14v11z" fill="#7bc678" /><path d="M6 1l2 4 4 1-4 2-1 4-2-4-4-1 4-2zM12 0l1 2-1 2-1-2zM1 9l1 1-1 1-1-1z" fill="#ffc400" /><rect x="20" y="4" width="24" height="24" rx="4" fill="#e3e5e8" /><path d="M20 12V7q0-3 3-3h18q3 0 3 3v5z" fill="#4778ce" /><path d="M26 1v6M37 1v6" stroke="#aaa" strokeWidth="2" /><path d="M41 32l-6-7a7 7 0 1 1 12 0z" fill="#d95a10" /><circle cx="41" cy="21" r="3" fill="#4a2a1b" /></svg>
        </div>
        <div className="ml-[2px] flex">
          {apps.map((k) => (
            <div key={k} className={`flex h-10 w-[49px] flex-col items-center pt-2 ${k === "brave" ? "border-b-2 border-[#76b9ed] bg-[#3f3d3d]" : k === "note" ? "border-b-2 border-[#76b9ed]" : ""}`}><AppIcon kind={k} /></div>
          ))}
        </div>
        <div className="ml-auto flex items-center text-[12px]">
          <Cell className="w-[27px]"><svg viewBox="0 0 26 24" className="h-6 w-[26px]"><circle cx="13" cy="12" r="10" fill="#ff9d22" /><path d="M2 8c-3-4 3-7 5-5 3-4 7 1 5 5zM11 22c-4-3 1-7 3-6 3-5 7-2 7 1 5-1 6 5 2 5z" fill="#b8cff7" /></svg></Cell>
          <Fit w={29} className="ml-[7px] text-[14px]">33°C</Fit>
          <Cell className="ml-[12px] w-6"><svg viewBox="0 0 16 16" className="size-4" fill="#fff"><path d="M0 1h8v3H6v6H3V4H0zM9 1h4q3 0 2 3.500 2 4-2 5.500H9zM1 11h3v4H1zM7 11h3v4H7zM12 11h4v4h-4zM4 8h9v2H4z" /><path d="M11 3h2v1.500h-2zM11 6.500h2V8h-2z" fill="#333" /></svg></Cell>
          <Cell className="w-6"><svg viewBox="0 0 14 12" className="h-3 w-3.5"><path d="M0 1h13v7H0z" fill="#54ae4c" /><path d="M2 3h2v3H2zM6 3h2v3H6z" fill="#1b5428" /><path d="M0 10h7" stroke="#b4ce59" strokeWidth="2" strokeDasharray="1 1" /><circle cx="10.500" cy="9" r="3" fill="#7acb78" /></svg></Cell>
          <Cell className="w-6"><svg viewBox="0 0 16 14" className="h-3.5 w-4" fill="none"><path d="M0 5h4l5-4v12L4 9H0z" fill="#e46b5b" /><path d="M11 4q2 3 0 6M14 2q3 5 0 10" stroke="#9d5445" /></svg></Cell>
          <Cell className="w-[25px]"><div className="flex size-4 items-center justify-center bg-[#e0093a]"><svg viewBox="0 0 10 10" className="size-2.5"><path d="M2 1h7v7L7 6V3H4zM1 5l2-1v3h3L5 9H1z" fill="#fff" /></svg></div></Cell>
          <Cell className="w-6"><svg viewBox="0 0 16 16" className="size-4"><path d="M7.500 0L14 2v5c0 4-3 7-6.500 8.500C4 14 1 11 1 7V2z" fill="#fff" /><path d="M7.500 1v14M1 7h13" stroke="#222" strokeWidth="1.500" /><circle cx="11.500" cy="11.500" r="4.500" fill="#16a34a" /><path d="M9.500 11.500l1.500 1.500 2.500-3" fill="none" stroke="#fff" strokeWidth="1.200" /></svg></Cell>
          <Cell className="w-6"><svg viewBox="0 0 15 16" className="h-4 w-[15px]" fill="none" stroke="#fff" strokeWidth="1.100"><rect x="2" y="4.500" width="8" height="7" rx="2" /><path d="M10 7l3-1.500v5L10 9M3 2.500q4-3 8 0M3 13.500q4 3 8 0" /></svg></Cell>
          <Cell className="w-[23px]"><svg viewBox="0 0 16 14" className="h-3.5 w-4" fill="none" stroke="#fff"><path d="M5.500 2.500h10v8h-11M9.500 10.500v3M6 13.500h8M.5.500h4v5h-4zM2.500 5.500v8" /></svg></Cell>
          <Cell className="w-[23px]"><svg viewBox="0 0 16 14" className="h-3.5 w-4" fill="none" stroke="#fff"><path d="M.5 5H3l4-4v12L3 9H.5zM9.500 5q1 2 0 4M11.500 3q2.500 4 0 8" /><path d="M13.500 1.500q4 5.500 0 11" stroke="#8b8172" /></svg></Cell>
          <Cell className="w-[39px]"><Fit w={23}>ENG</Fit></Cell>
          <div className="flex w-[68px] flex-col items-center text-[12px] leading-[18px]"><Fit w={27}>17.39</Fit><Fit w={58}>19/10/2025</Fit></div>
          <Cell className="w-[42px]"><svg viewBox="0 0 16 16" className="size-4" fill="none" stroke="#fff"><path d="M.5 1.500h15v10h-5L8 14.500l-1.500-3h-6z" /></svg></Cell>
          <div className="w-3" />
        </div>
      </div>
    </div>
  );
}

export default function App() {
  return (
    <div className="flex h-[768px] w-[1366px] flex-col overflow-hidden bg-[#1a1c23] font-['Open_Sans',sans-serif]">
      <TabStrip />
      <Toolbar />
      <main className="flex h-[648px] shrink-0">
        <ChatPanel />
        <PreviewPanel />
      </main>
      <Taskbar />
    </div>
  );
}
